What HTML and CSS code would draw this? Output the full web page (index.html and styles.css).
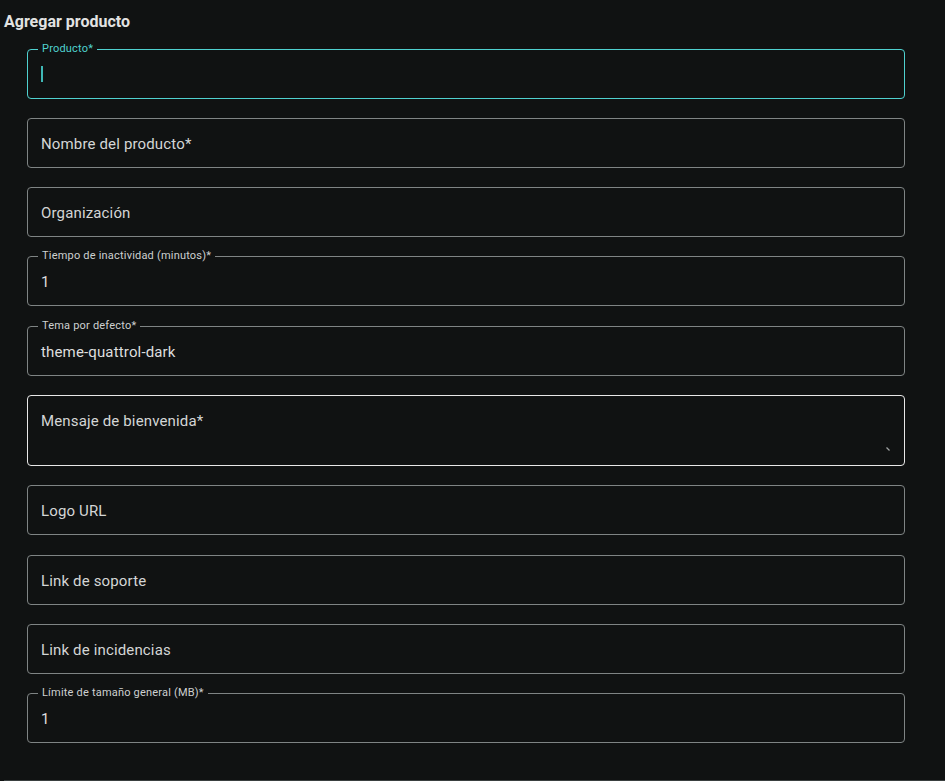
FILE: index.html
```html
<!DOCTYPE html>
<html lang="es">
<head>
<meta charset="utf-8">
<title>Agregar producto</title>
<link rel="stylesheet" href="styles.css">
</head>
<body>
<div class="page">
  <h1 class="title">Agregar producto</h1>
  <div class="form">
    <div class="field focused">
      <span class="float-label">Producto*</span>
      <span class="caret"></span>
    </div>
    <div class="field"><span class="placeholder">Nombre del producto*</span></div>
    <div class="field"><span class="placeholder">Organización</span></div>
    <div class="field">
      <span class="float-label">Tiempo de inactividad (minutos)*</span>
      <span class="value">1</span>
    </div>
    <div class="field">
      <span class="float-label">Tema por defecto*</span>
      <span class="value">theme-quattrol-dark</span>
    </div>
    <div class="field textarea hovered">
      <span class="placeholder">Mensaje de bienvenida*</span>
      <svg class="resize" width="4" height="4" viewBox="0 0 4 4"><path d="M0.5 0.5 L3.5 3.5" stroke="#a0a4a4" stroke-width="1.3"/></svg>
    </div>
    <div class="field"><span class="placeholder">Logo URL</span></div>
    <div class="field"><span class="placeholder">Link de soporte</span></div>
    <div class="field"><span class="placeholder">Link de incidencias</span></div>
    <div class="field">
      <span class="float-label">Límite de tamaño general (MB)*</span>
      <span class="value">1</span>
    </div>
  </div>
  <div class="divider"></div>
</div>
</body>
</html>
```
FILE: styles.css
```css
html, body {
  margin: 0;
  padding: 0;
  background: #101212;
  height: 100%;
  overflow: hidden;
}
body {
  font-family: Roboto, "Liberation Sans", Arial, sans-serif;
  color: #dcdcdc;
}
.page {
  padding-top: 10px;
}
.title {
  margin: 0;
  padding-left: 4px;
  font-size: 16px;
  line-height: 24px;
  font-weight: 700;
  color: #e2e2e2;
}
.form {
  display: flex;
  flex-direction: column;
  gap: 19.3px;
  margin-top: 14.6px;
  padding: 0 40px 0 27px;
}
.field {
  position: relative;
  box-sizing: border-box;
  height: 50px;
  border: 1px solid #7f8484;
  border-radius: 4px;
  display: flex;
  align-items: center;
  padding: 2px 13px 0;
  font-size: 15px;
  letter-spacing: 0.15px;
}
.field.focused {
  border-color: #4fd1cf;
}
.field.hovered {
  border-color: #e8e8e8;
}
.field.textarea {
  height: 71px;
  align-items: flex-start;
  padding-top: 16.5px;
}
.float-label {
  position: absolute;
  left: 10px;
  top: -7px;
  padding: 0 4px;
  background: #101212;
  font-size: 11px;
  line-height: 12px;
  letter-spacing: 0.2px;
  color: #cdd0d0;
}
.focused .float-label {
  color: #4fd1cf;
}
.placeholder {
  color: #d4d6d6;
  line-height: 16px;
}
.value {
  color: #dedede;
  line-height: 16px;
}
.caret {
  display: block;
  width: 2px;
  height: 16px;
  background: #3fb8b6;
  margin-top: -1px;
}
.resize {
  position: absolute;
  right: 14px;
  bottom: 14px;
}
.divider {
  margin: 37px 0 0 4px;
  height: 1px;
  background: #3a4040;
}
```
